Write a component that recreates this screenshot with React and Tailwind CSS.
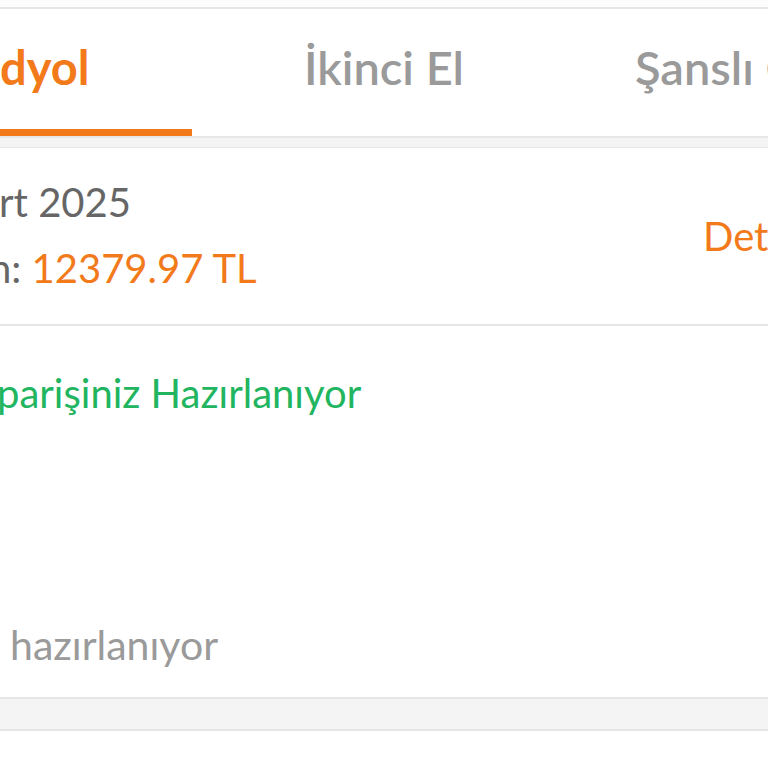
import React from "react";

const font = { fontFamily: "Lato, 'Noto Sans', sans-serif" };

function Tab({ label, active, className }) {
  return (
    <div className={`flex flex-col justify-between h-full ${className}`}>
      <div
        className={`pt-[35px] text-[47px] leading-none whitespace-nowrap ${
          active ? "font-bold text-[#f27a1a]" : "font-semibold text-[#9a9a9a]"
        }`}
      >
        {label}
      </div>
      <div className={`h-[7px] ${active ? "bg-[#f27a1a]" : "bg-transparent"}`} />
    </div>
  );
}

export default function App() {
  return (
    <div className="w-[768px] h-[768px] overflow-hidden bg-white" style={font}>
      {/* top strip */}
      <div className="h-[7px] bg-[#fcfcfc]" />

      {/* tabs */}
      <div className="flex h-[131px] border-t-2 border-b-2 border-[#e6e6e6] bg-white overflow-hidden">
        <Tab label="dyol" active className="w-[192px] shrink-0" />
        <Tab label="İkinci El" className="w-[384px] shrink-0 items-center" />
        <Tab label="Şanslı Çekiliş" className="shrink-0 pl-[59px]" />
      </div>

      {/* gap */}
      <div className="h-[10px] bg-[#f4f4f4] border-b border-[#e6e6e6]" />

      {/* order header card */}
      <div className="flex items-start h-[178px] border-b-2 border-[#e6e6e6] overflow-hidden">
        <div className="w-[703px] shrink-0 pt-[34px] text-[40px] leading-none whitespace-nowrap">
          <div className="text-[#666666] -ml-[1px]">rt 2025</div>
          <div className="mt-[26px] -ml-[11px]">
            <span className="text-[#666666]">n: </span>
            <span className="text-[#f27a1a]">12379.97 TL</span>
          </div>
        </div>
        <div className="self-center text-[40px] leading-none text-[#f27a1a] whitespace-nowrap">
          Detaylar
        </div>
      </div>

      {/* status card */}
      <div className="h-[373px] border-b-2 border-[#e6e6e6] overflow-hidden">
        <div className="pt-[47px] text-[40px] leading-none text-[#22b55f] whitespace-nowrap -ml-[3px]">
          parişiniz Hazırlanıyor
        </div>
        <div className="mt-[211px] pl-[10px] text-[41px] leading-none text-[#9a9a9a] whitespace-nowrap">
          hazırlanıyor
        </div>
      </div>

      {/* gap */}
      <div className="h-[32px] bg-[#f4f4f4] border-b-2 border-[#e6e6e6]" />
      <div className="h-[40px] bg-white" />
    </div>
  );
}
